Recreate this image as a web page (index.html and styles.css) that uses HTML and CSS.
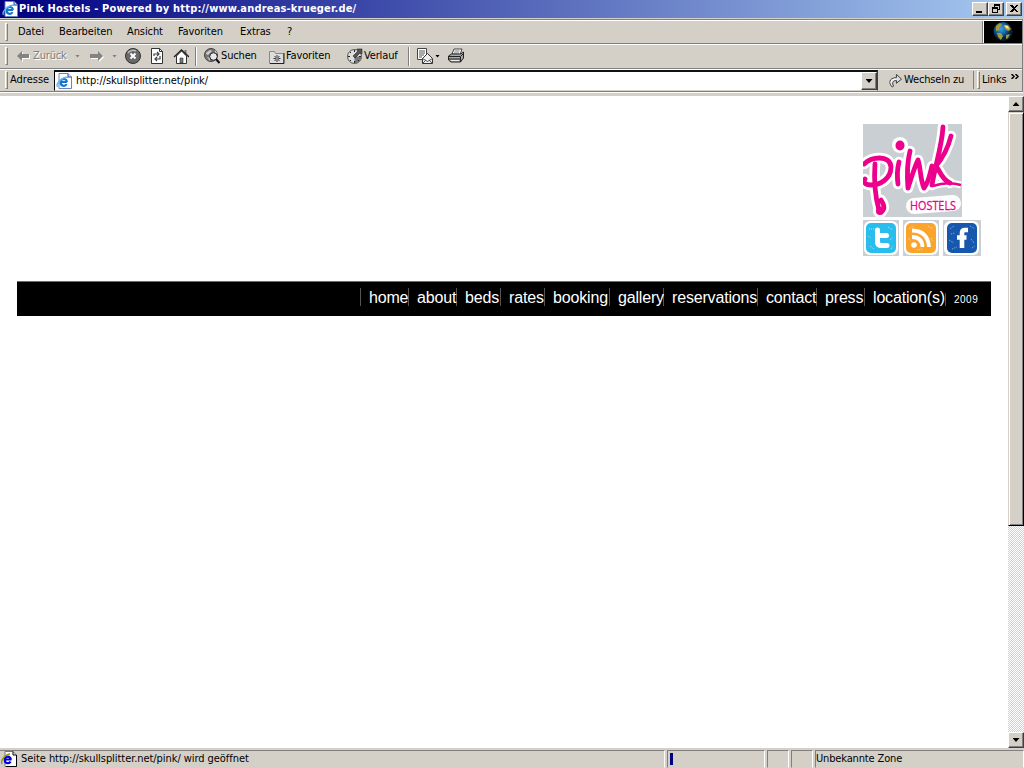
FILE: index.html
```html
<!DOCTYPE html>
<html lang="de">
<head>
<meta charset="utf-8">
<title>Pink Hostels</title>
<link rel="stylesheet" href="styles.css">
</head>
<body>
<svg width="0" height="0" class="defs">
  <symbol id="ie" viewBox="0 0 16 16"><path d="M3 .5h9l3.500 3.500v11.500H3z" fill="#fff" stroke="#6684bd"/><path d="M12 .5v3.500h3.500" fill="#dceaff" stroke="#24459b"/><path d="M11 9H4.800a3 3 0 0 1 6 0M4.800 9.500a3 3 0 0 0 5.700 1.600" fill="none" stroke="#1675d1" stroke-width="2.200"/><path d="M1.500 14C-1 10 8 3 12 4.500" fill="none" stroke="#55b8f4" stroke-width="1.300"/></symbol>
</svg>
<div class="window">
  <header class="titlebar">
    <svg class="i16"><use href="#ie"/></svg>
    <span class="caption">Pink Hostels - Powered by http://www.andreas-krueger.de/</span>
    <div class="controls">
      <span class="btn"><svg viewBox="0 0 12 10"><path d="M2 7h6v2H2z"/></svg></span>
      <span class="btn"><svg viewBox="0 0 12 10"><path d="M4 0h6v6H8V5h1V2H5v1H4zM2 3h6v6H2zM3 5v3h4V5z" fill-rule="evenodd"/></svg></span>
      <span class="btn close"><svg viewBox="0 0 12 10"><path d="M2 1h2l2 2 2-2h2L7 4.500 10 8H8L6 6 4 8H2l3-3.500z"/></svg></span>
    </div>
  </header>
  <div class="bars">
    <nav class="bar menu">
      <i class="grip"></i>
      <span class="m1">Datei</span><span class="m2">Bearbeiten</span><span class="m3">Ansicht</span><span class="m4">Favoriten</span><span class="m5">Extras</span><span>?</span>
      <div class="throbber"><svg viewBox="0 0 38 22"><defs><radialGradient id="g" cx=".4" cy=".35"><stop offset="0" stop-color="#3aa5e8"/><stop offset=".6" stop-color="#14609f"/><stop offset="1" stop-color="#06203c"/></radialGradient></defs><circle cx="19" cy="10.500" r="9.500" fill="url(#g)"/><path d="M12 5l4-3 2 2-3 3 1 2-4 1zM20 5l4-1 3 4-2 2-3-1zM13 12l4 0 2 3-2 4-3-3zM22 14l4-1-2 4-2 1z" fill="#a39a3c"/><path d="M20 4l4 1 1 3-3-1z" fill="#ffe97a"/></svg></div>
    </nav>
    <div class="bar tools">
      <i class="grip"></i>
      <svg class="back" viewBox="0 0 13 12"><path d="M1 7l5-5v3h7v4H6v3z" fill="#fff"/><path d="M0 6l5-5v3h7v4H5v3z" fill="#858380"/></svg>
      <span class="t-back">Zurück</span>
      <i class="drop gray d1"></i>
      <svg class="fwd" viewBox="0 0 14 12"><path d="M14 7L9 2v3H1v4h8v3z" fill="#fff"/><path d="M13 6L8 1v3H0v4h8v3z" fill="#858380"/></svg>
      <i class="drop gray d2"></i>
      <svg class="i16 g8" viewBox="0 0 16 16"><circle cx="8" cy="8" r="7.500" fill="#686868" stroke="#303030"/><path d="M3 5a6 6 0 0 1 8-2" stroke="#bbb" stroke-width="1.500" fill="none"/><path d="M5.500 5.500l5 5m0-5l-5 5" stroke="#fff" stroke-width="2"/></svg>
      <svg class="i16 g8" viewBox="0 0 16 16"><path d="M2.500.5h8l3 3v12h-11z" fill="#fff" stroke="#333"/><path d="M10.500.5v3h3" fill="none" stroke="#333"/><path d="M5 8V6h5M8 4l2 2-2 2M11 8v3H6M8 9l-2 2 2 2" fill="none" stroke="#444" stroke-width="1.200"/></svg>
      <svg class="i16 g6" viewBox="0 0 16 16"><path d="M3.500 8v7.500h10V8l-5-5z" fill="#fff" stroke="#333"/><path d="M11.500 2h2v5h-2z" fill="#777"/><path d="M1 9l7.500-7L16 9" fill="none" stroke="#222" stroke-width="1.300"/><path d="M7 10h3v5H7z" fill="#777" stroke="#333" stroke-width=".6"/></svg>
      <i class="sep s1"></i>
      <svg class="i16" viewBox="0 0 16 16"><circle cx="7" cy="7" r="6.500" fill="#777" stroke="#444"/><path d="M2 5l4-3 2 1-4 4-2-1zm9-3l3 4-3-1zM3 9l3 1v3z" fill="#ccc"/><circle cx="9.500" cy="8.500" r="3.800" fill="#e8e8e8" stroke="#222"/><path d="M12 11l3.500 4" stroke="#111" stroke-width="2"/></svg>
      <span class="t-search">Suchen</span>
      <svg class="i16" viewBox="0 0 16 16"><path d="M.5 3.500h5l1 2h8v10H.5z" fill="#ddd" stroke="#888"/><path d="M1 15.500h14V5" fill="none" stroke="#222"/><path d="M8 7v7M4.500 10.500h7M5.500 8l5 5m0-5l-5 5" stroke="#333"/><circle cx="8" cy="10.500" r="1.300" fill="#999"/></svg>
      <span class="t-fav">Favoriten</span>
      <svg class="i16" viewBox="0 0 16 16"><circle cx="7.500" cy="8.500" r="7" fill="#ddd" stroke="#555"/><path d="M7.500 15.500a7 7 0 0 0 7-7l-7 0z" fill="#777"/><path d="M7.500 2v2m0 9v2M1 8.500h2m9 0h2M3 4l1 1M3 13l1-1m7 0l1 1" stroke="#222"/><path d="M6 8l5-5-1-2h5v5l-2-1-5 5z" fill="#555" stroke="#222" stroke-width=".6"/></svg>
      <span class="t-hist">Verlauf</span>
      <i class="sep s2"></i>
      <svg class="i16" viewBox="0 0 16 16"><path d="M.5.5h9v11h-9z" fill="#fff" stroke="#444"/><path d="M2 3h6M2 5h6M2 7h5M2 9h3" stroke="#555"/><path d="M5.500 10.500l5-5 5 5v5h-10z" fill="#eee" stroke="#333"/><path d="M5.500 10.500l5 3 5-3M6 15l3-3m6 3l-3-3" fill="none" stroke="#555"/></svg>
      <i class="drop d3"></i>
      <svg class="i16 print" viewBox="0 0 16 16"><path d="M4 6l2-5h8l-2 6z" fill="#fff" stroke="#444"/><path d="M6.500 3h5M6 5h5" stroke="#777"/><path d="M.5 8l3-2h9l3-2v6l-3 4H3l-2.500-2z" fill="#aaa" stroke="#222"/><path d="M1 8.500h11.500l3-3M1 11h11M12.500 9v5" stroke="#222" fill="none"/><path d="M3 12.500h8" stroke="#eee"/></svg>
    </div>
    <div class="bar address">
      <i class="grip"></i><span class="t-addr">Adresse</span>
      <div class="field"><svg class="i16"><use href="#ie"/></svg><span class="url">http://skullsplitter.net/pink/</span><span class="combo"><i class="drop"></i></span></div>
      <svg class="go" viewBox="0 0 14 16"><path d="M3.500 15C0 12-1 5 8 5V1.500l5.500 5L8 11V8C4 8 3 11 5 14z" fill="#ddd" stroke="#333"/><path d="M2 11q0-5 6-4.500" stroke="#fff" fill="none"/></svg>
      <span class="t-go">Wechseln zu</span>
      <i class="grip links"></i><span class="t-links">Links</span>
      <svg class="chev" viewBox="0 0 8 5"><path d="M.5 0l2.500 2.500L.5 5M4.500 0L7 2.500 4.500 5" fill="none" stroke="#000" stroke-width="1.500"/></svg>
    </div>
  </div>
  <div class="view">
    <main class="page">
      <div class="brand">
        <svg class="logo" viewBox="0 0 99 93">
          <defs><g id="script" fill="none" stroke-linecap="round" stroke-linejoin="round">
            <path d="M1 40C8 33 27 30 28 43C28 55 17 61 8 61C2 61 0 58 2 55"/>
            <path d="M12 40C11 54 12 72 16 86M17 87C22 87 22 82 18 76"/>
            <path d="M36 38C34 46 34 53 35 60"/>
            <path d="M47 27C44 39 44 52 45 64C48 55 51 44 55 36C58 45 57 55 61 64C66 58 67 49 69 42"/>
            <path d="M80 3C79 22 72 42 69 61"/>
            <path d="M88 12C85 24 78 36 73 42C77 47 79 56 87 59"/>
          </g></defs>
          <path fill="#c9cfd2" d="M0 0h99v93H0z"/>
          <g stroke="#fff" stroke-width="10.500"><use href="#script"/><path d="M70 62Q84 57 98 61" fill="none" stroke-width="7"/></g>
          <circle cx="37" cy="21" r="8" fill="#fff"/><circle cx="17" cy="87" r="7" fill="#fff"/>
          <path d="M51 82l39-3" stroke="#fff" stroke-width="16" stroke-linecap="round"/>
          <g stroke="#ec008c" stroke-width="4.800"><use href="#script"/><path d="M70 62Q84 57 98 61" fill="none" stroke-width="2.500"/></g>
          <ellipse cx="37" cy="21.500" rx="4.500" ry="5" fill="#ec008c"/><circle cx="17" cy="87" r="4" fill="#ec008c"/>
          <text x="47" y="86" textLength="46" lengthAdjust="spacingAndGlyphs" class="hostels">HOSTELS</text>
        </svg>
        <div class="social">
          <svg width="36" height="36" viewBox="0 0 36 36"><path fill="#c9cfd2" d="M0 0h36v36H0z"/><rect x="1" y="1" width="34" height="34" rx="6" fill="#fff"/><rect x="3" y="3" width="30" height="30" rx="5" fill="#29bdee"/><path d="M6 9h5M7 26l4 3M25 7l5 3M27 20l3-3M28 29l2-3M5 16l3 2" stroke="#a7e5fa" stroke-dasharray="1 1"/><path d="M14.500 10v12q0 3.500 4 3.500h5.500M15 15.500h8.500" fill="none" stroke="#fff" stroke-width="5" stroke-linecap="round"/></svg>
          <svg width="36" height="36" viewBox="0 0 36 36"><path fill="#c9cfd2" d="M0 0h36v36H0z"/><rect x="1" y="1" width="34" height="34" rx="6" fill="#fff"/><rect x="3" y="3" width="30" height="30" rx="5" fill="#fba42c"/><path d="M6 9l4-3M25 6l5 3M28 18l2 3M5 18l3 3M14 30l5-1" stroke="#ffdda5" stroke-dasharray="1 1"/><circle cx="11" cy="25" r="2.800" fill="#fff"/><path d="M9 17q10 0 10.500 10M9 10.500q16 .5 17 16.500" fill="none" stroke="#fff" stroke-width="3.800"/></svg>
          <svg width="38" height="36" viewBox="0 0 38 36"><path fill="#c9cfd2" d="M0 0h38v36H0z"/><rect x="1" y="1" width="35" height="34" rx="6" fill="#fff"/><rect x="4" y="3" width="30" height="30" rx="5" fill="#1758ae"/><path d="M7 9l4-3M27 6l5 3M28 19l3 4M6 20l5 3M9 29l5-2M29 28l3-2M8 14l4-1" stroke="#91afe0" stroke-dasharray="1 1"/><path d="M19 28V13q0-3 3-3h3M14 17.500h9.500" fill="none" stroke="#fff" stroke-width="4.600"/></svg>
        </div>
      </div>
      <ul class="nav">
        <li class="lead"></li><li class="n48">home</li><li class="n48">about</li><li class="n44">beds</li><li class="n44">rates</li><li class="n65">booking</li><li class="n54">gallery</li><li class="n94">reservations</li><li class="n59">contact</li><li class="n48">press</li><li class="n81">location(s)</li><li class="year">2009</li>
      </ul>
    </main>
    <aside class="scroll"><span class="sbtn"><i class="up"></i></span><span class="thumb"></span><span class="track"></span><span class="sbtn"><i class="drop"></i></span></aside>
  </div>
  <footer class="status">
    <div class="cell c1"><svg class="i16" viewBox="0 0 16 16"><path d="M4 .5h8l3.500 3.500v11.500H4z" fill="#fff" stroke="#777"/><path d="M15.500 4v11.500H5M12 .5V4h3" fill="none" stroke="#000"/><path d="M10.500 8.500H3.800a3 2.800 0 0 1 6 0M3.800 9a3 3 0 0 0 5.700 1.500" fill="none" stroke="#0000d8" stroke-width="2.200"/><path d="M1 13C-1 9 5 3 9 3" fill="none" stroke="#9a9a00" stroke-width="1.500"/></svg><span class="t-status">Seite http://skullsplitter.net/pink/ wird geöffnet</span></div>
    <div class="cell c2"><i class="prog"></i></div><div class="cell c3"></div><div class="cell c3"></div><div class="cell c5"><span class="t-zone">Unbekannte Zone</span></div>
  </footer>
</div>
</body>
</html>
```
FILE: styles.css
```css
* { box-sizing: border-box; }
body { margin: 0; width: 1024px; height: 768px; overflow: hidden; background: #d4d0c8; color: #000; font: 11px/14px "DejaVu Sans Condensed", "DejaVu Sans", sans-serif; font-stretch: condensed; }
svg { display: block; flex: none; }
span { white-space: nowrap; flex: none; }
.defs { display: none; }
.i16 { width: 16px; height: 16px; }
.window { width: 1024px; height: 768px; display: flex; flex-direction: column; }
.titlebar { height: 18px; display: flex; align-items: center; padding: 0 2px; background: linear-gradient(90deg, #000080, #a6caf0); color: #fff; }
.caption { margin-left: 1px; font-weight: bold; letter-spacing: .18px; }
.controls { margin-left: auto; display: flex; }
.btn { width: 16px; height: 14px; background: #d4d0c8; border: 1px solid; border-color: #fff #404040 #404040 #fff; box-shadow: inset -1px -1px #808080; padding: 1px; }
.btn svg { width: 12px; height: 10px; shape-rendering: crispEdges; }
.close { margin-left: 2px; }
.bars { height: 78px; padding-top: 1px; }
.bar { display: flex; align-items: center; width: 1023px; height: 25px; border-top: 1px solid #808080; border-right: 1px solid #808080; box-shadow: inset 0 1px #fff; padding-left: 5px; }
.menu { height: 24px; letter-spacing: -.1px; }
.tools { letter-spacing: -.15px; }
.grip { width: 3px; height: 18px; flex: none; border: 1px solid; border-color: #fff #808080 #808080 #fff; }
.menu .grip { margin-right: 10px; }
.m1 { width: 41px; } .m2 { width: 68px; } .m3 { width: 51px; } .m4 { width: 62px; } .m5 { width: 47px; }
.throbber { margin-left: auto; width: 40px; height: 22px; align-self: flex-end; border-left: 1px solid #808080; box-shadow: inset 1px 0 #fff; padding-left: 1px; }
.throbber svg { width: 38px; height: 22px; background: #000; }
.back { width: 13px; height: 12px; margin: 0 3px 0 9px; }
.t-back { width: 42px; color: #808080; text-shadow: 1px 1px #fff; }
.drop { display: block; flex: none; width: 5px; height: 3px; background: #000; clip-path: polygon(0 0, 100% 0, 50% 100%); }
.gray { background: #808080; }
.d1 { margin-right: 10px; }
.fwd { width: 14px; height: 12px; margin-right: 8px; }
.g8 { margin-right: 8px; } .g6 { margin-right: 5px; }
.d2 { margin-right: 8px; }
.sep { width: 2px; height: 19px; flex: none; border-left: 1px solid #808080; background: #fff; }
.s1 { margin: 0 7px 0 1px; }
.t-search { width: 49px; padding-left: 1px; }
.t-fav { width: 62px; padding-left: 1px; }
.t-hist { width: 45px; padding-left: 1px; }
.s2 { margin-right: 7px; }
.d3 { margin: 0 8px 0 2px; }
.address { height: 24px; border-bottom: 1px solid #808080; box-shadow: inset 0 1px #fff, 0 1px #fff; }
.t-addr { width: 44px; margin-left: 2px; }
.field { width: 824px; height: 21px; align-self: flex-end; background: #fff; border: 1px solid; border-width: 2px 1px 1px; border-color: #111 #404040 #d4d0c8 #000; display: flex; align-items: center; padding-left: 1px; }
.url { margin-left: 4px; letter-spacing: -.05px; }
.combo, .sbtn { display: flex; align-items: center; justify-content: center; width: 16px; height: 16px; background: #d4d0c8; border: 1px solid; border-color: #fff #404040 #404040 #fff; box-shadow: inset -1px -1px #808080; flex: none; }
.combo { margin-left: auto; height: 18px; }
.combo .drop, .sbtn .drop { width: 7px; height: 4px; }
.go { width: 13px; height: 15px; margin-left: 11px; }
.t-go { margin-left: 2px; width: 69px; letter-spacing: -.15px; }
.links { margin-left: 4px; box-shadow: -3px 0 #d4d0c8, -4px 0 #808080; }
.t-links { margin-left: 2px; width: 29px; letter-spacing: -.2px; }
.chev { width: 8px; height: 5px; align-self: flex-start; margin-top: 5px; }
.view { height: 652px; display: flex; }
.page { width: 1008px; background: #fff; padding: 28px 17px 0; }
.brand { margin-left: 846px; height: 157px; }
.logo { width: 99px; height: 93px; overflow: hidden; }
.hostels { font: 13px "Open Sans", sans-serif; fill: #ec008c; stroke: #ec008c; stroke-width: .3px; }
.social { display: flex; gap: 4px; margin-top: 3px; }
.nav { display: flex; list-style: none; margin: 0; width: 974px; height: 35px; padding: 6px 0 0; background: #000; border-top: 1px solid #6a6e70; color: #fff; font: 16px/19px "Liberation Sans", Arial, sans-serif; }
.nav li { height: 18px; padding-left: 8px; border-right: 1px solid #555; white-space: nowrap; letter-spacing: -.17px; }
.nav .lead { width: 344px; }
.n44 { width: 44px; } .n48 { width: 48px; } .n54 { width: 54px; } .n59 { width: 59px; } .n65 { width: 65px; } .n81 { width: 81px; } .n94 { width: 94px; }
.nav .year { font-size: 10px; border: 0; line-height: 23px; letter-spacing: .5px; }
.nav .n81 { border-right-color: transparent; background: linear-gradient(#555, #555) 100% 100% / 1px 13px no-repeat border-box; }
.scroll { width: 16px; display: flex; flex-direction: column; }
.up { width: 7px; height: 4px; background: #000; clip-path: polygon(50% 0, 100% 100%, 0 100%); }
.thumb { height: 414px; background: #d4d0c8; border: 1px solid; border-color: #d4d0c8 #000 #000 #d4d0c8; box-shadow: inset 1px 1px #fff, inset -1px -1px #808080; }
.track { flex: 1; background: repeating-conic-gradient(#d4d0c8 0 25%, #fff 0 50%) 0 0 / 2px 2px; }
.status { height: 20px; padding-top: 2px; display: flex; gap: 2px; }
.cell { height: 18px; border: 1px solid; border-color: #808080 #fff #d4d0c8 #808080; display: flex; align-items: center; }
.c1 { width: 665px; padding-left: 1px; border-left: 0; }
.t-status { margin-left: 4px; letter-spacing: -.06px; }
.c2 { width: 98px; padding-left: 2px; }
.prog { width: 3px; height: 12px; background: #000080; }
.c3 { width: 22px; }
.c5 { flex: 1; }
.t-zone { letter-spacing: -.15px; }
```
